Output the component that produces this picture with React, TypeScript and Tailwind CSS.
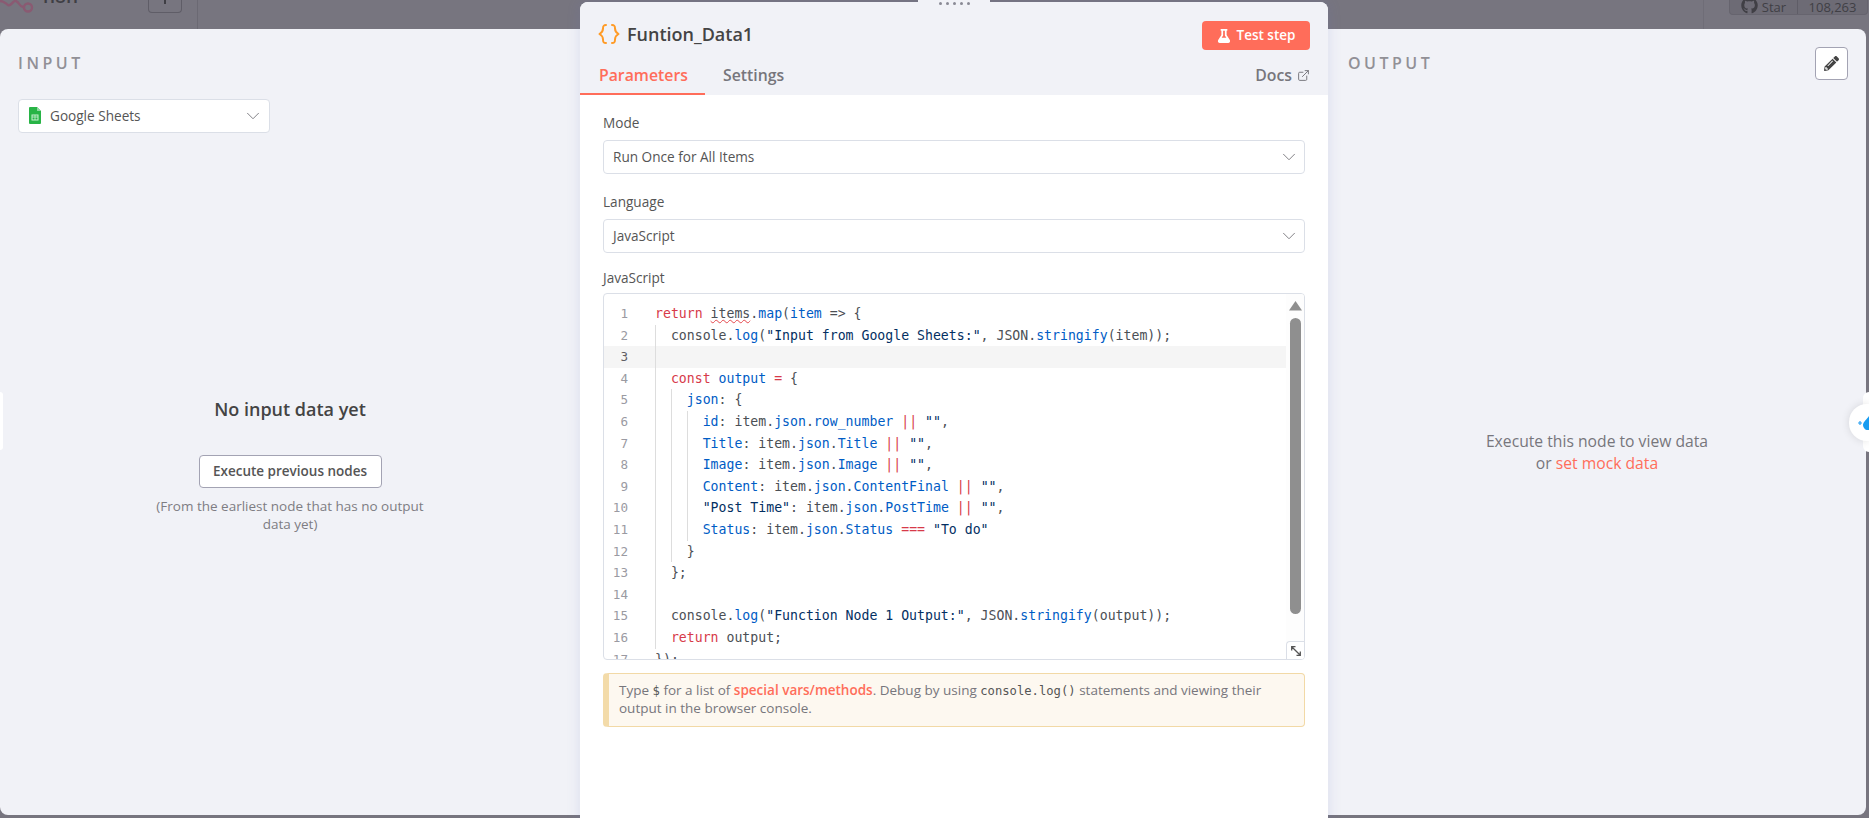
import React from "react";
import { FaFlask, FaPencilAlt, FaGithub } from "react-icons/fa";
import { ChevronDown, ExternalLink } from "lucide-react";

const K = ({ children }: { children: React.ReactNode }) => <span className="text-[#d73a49]">{children}</span>;
const B = ({ children }: { children: React.ReactNode }) => <span className="text-[#005cc5]">{children}</span>;
const S = ({ children }: { children: React.ReactNode }) => <span className="text-[#032f62]">{children}</span>;

const lines: { g: number; c: React.ReactNode }[] = [
  { g: 0, c: <><K>return</K> <span className="underline decoration-wavy decoration-[#e5484d] decoration-1">items</span>.<B>map</B>(<B>item</B> =&gt; {"{"}</> },
  { g: 1, c: <>console.<B>log</B>(<S>"Input from Google Sheets:"</S>, JSON.<B>stringify</B>(item));</> },
  { g: 1, c: <></> },
  { g: 1, c: <><K>const</K> <B>output</B> <K>=</K> {"{"}</> },
  { g: 2, c: <><B>json</B>: {"{"}</> },
  { g: 3, c: <><B>id</B>: item.<B>json</B>.<B>row_number</B> <K>||</K> <S>""</S>,</> },
  { g: 3, c: <><B>Title</B>: item.<B>json</B>.<B>Title</B> <K>||</K> <S>""</S>,</> },
  { g: 3, c: <><B>Image</B>: item.<B>json</B>.<B>Image</B> <K>||</K> <S>""</S>,</> },
  { g: 3, c: <><B>Content</B>: item.<B>json</B>.<B>ContentFinal</B> <K>||</K> <S>""</S>,</> },
  { g: 3, c: <><S>"Post Time"</S>: item.<B>json</B>.<B>PostTime</B> <K>||</K> <S>""</S>,</> },
  { g: 3, c: <><B>Status</B>: item.<B>json</B>.<B>Status</B> <K>===</K> <S>"To do"</S></> },
  { g: 2, c: <>{"}"}</> },
  { g: 1, c: <>{"};"}</> },
  { g: 1, c: <></> },
  { g: 1, c: <>console.<B>log</B>(<S>"Function Node 1 Output:"</S>, JSON.<B>stringify</B>(output));</> },
  { g: 1, c: <><K>return</K> output;</> },
  { g: 0, c: <>{"});"}</> },
];

function Select({ label }: { label: string }) {
  return (
    <div className="flex h-[34px] items-center justify-between rounded-[4px] border border-[#dbdfe7] bg-white pl-[9px] pr-[4px] text-[13.6px] text-[#555555]">
      <span>{label}</span>
      <ChevronDown size={22} strokeWidth={1} className="text-[#77767c]" />
    </div>
  );
}

function Sheets() {
  return (
    <svg width="12" height="17" viewBox="0 0 12 17">
      <path d="M1 0h7l4 4v12a1 1 0 0 1-1 1H1a1 1 0 0 1-1-1V1a1 1 0 0 1 1-1z" fill="#28b446" />
      <path d="M8 0l4 4H8z" fill="#8ed8a0" />
      <rect x="3" y="8" width="6" height="5" fill="none" stroke="#c9f0d2" strokeWidth="1" />
      <path d="M3 10h6M6 8v5" stroke="#c9f0d2" strokeWidth="0.8" />
    </svg>
  );
}

export default function App() {
  return (
    <div className="h-[818px] w-[1869px] overflow-hidden bg-[#77757f] font-['Open_Sans',sans-serif]">
      {/* dimmed canvas header */}
      <div className="flex h-[29px] items-start">
        <div className="flex h-[29px] w-[198px] items-start border-r border-[#6b6973]">
          <svg width="34" height="14" viewBox="0 0 34 14" className="shrink-0">
            <path d="M0 1c4 0 5 2 8 4s5-5 8-4 3 5 7 6" fill="none" stroke="#8a5a72" strokeWidth="2.4" />
            <circle cx="28" cy="7.5" r="4" fill="none" stroke="#8a5a72" strokeWidth="2.4" />
          </svg>
          <div className="ml-[9px] h-[7px] w-[40px] overflow-hidden">
            <div className="-mt-[14px] text-[19px] font-semibold leading-[20px] text-[#3f3e44]">n8n</div>
          </div>
          <div className="ml-[65px] flex h-[13px] w-[34px] items-start justify-center rounded-b-[4px] border border-t-0 border-[#5f5d67]">
            <div className="h-[4px] w-[2px] bg-[#3f3e44]" />
          </div>
        </div>
        <div className="flex-1" />
        <div className="flex h-[29px] w-[166px] items-start border-l border-[#6f6d77] pl-[25px]">
          <div className="flex h-[15px] w-[139px] items-end rounded-b-[4px] border border-t-0 border-[#66646e] bg-[#6d6b75] text-[13px] leading-[14px] text-[#403f45]">
            <div className="flex w-[68px] items-center justify-center gap-[4px] overflow-hidden border-r border-[#5f5d67]">
              <FaGithub size={17} className="-mt-[3px]" />
              <span>Star</span>
            </div>
            <div className="flex-1 text-center">108,263</div>
          </div>
        </div>
      </div>

      {/* dialog */}
      <div className="flex h-[786px] w-[1866px] rounded-[8px] bg-[#f1f2f7]">
        {/* input */}
        <div className="relative flex w-[580px] shrink-0 flex-col px-[18px]">
          <div className="pt-[23px] text-[16px] font-semibold leading-[22px] tracking-[3.5px] text-[#919096]">INPUT</div>
          <div className="mt-[25px] flex h-[34px] w-[252px] items-center justify-between rounded-[4px] border border-[#dbdfe7] bg-white pl-[10px] pr-[5px] text-[13.6px] text-[#555555]">
            <span className="flex items-center gap-[9px]"><Sheets />Google Sheets</span>
            <ChevronDown size={22} strokeWidth={1} className="text-[#77767c]" />
          </div>
          <div className="flex flex-col items-center pt-[263px]">
            <div className="text-[18px] font-semibold leading-[26px] text-[#444444]">No input data yet</div>
            <div className="mt-[33px] flex h-[33px] w-[183px] items-center justify-center rounded-[4px] border border-[#a3a3b3] bg-white text-[13.5px] font-semibold text-[#555555]">Execute previous nodes</div>
            <div className="mt-[9px] w-[280px] text-center text-[13.5px] leading-[18px] text-[#7e7d83]">(From the earliest node that has no output data yet)</div>
          </div>
          <div className="absolute left-0 top-[363px] h-[58px] w-[3px] rounded-r-[4px] bg-white" />
        </div>

        {/* center panel */}
        <div className="relative z-10 -mt-[27px] w-[748px] shrink-0">
          <div className="absolute -top-[2px] left-[338px] flex h-[7px] w-[72px] items-center justify-center gap-[4px] bg-[#f1f2f7]">
            {[0, 1, 2, 3, 4].map((d) => (
              <span key={d} className="h-[3px] w-[3px] rounded-full bg-[#8a8a95]" />
            ))}
          </div>
          <div className="flex h-[830px] flex-col overflow-hidden rounded-t-[8px] bg-white shadow-[0_0_14px_rgba(99,110,190,0.16)]">
            <div className="bg-[#f1f2f7]">
              <div className="flex h-[64px] items-start justify-between pl-[18px] pr-[18px] pt-[19px]">
                <div className="mt-[1px] flex items-center gap-[7px]">
                  <svg width="22" height="22" viewBox="0 0 22 22" fill="none" stroke="#ff9b26" strokeWidth="2" strokeLinecap="round" strokeLinejoin="round">
                    <path d="M8 2C5 2 5 3.500 5 5.500S5 9 1.500 11C5 13 5 14.500 5 16.500S5 20 8 20" />
                    <path d="M14 2C17 2 17 3.500 17 5.500S17 9 20.500 11C17 13 17 14.500 17 16.500S17 20 14 20" />
                  </svg>
                  <span className="text-[18px] font-semibold leading-[24px] text-[#444444]">Funtion_Data1</span>
                </div>
                <div className="flex h-[29px] w-[108px] items-center justify-center gap-[6px] rounded-[4px] bg-[#ff6d5a] text-[13.5px] font-semibold text-white">
                  <FaFlask size={14} />Test step
                </div>
              </div>
              <div className="flex h-[29px] items-start justify-between pr-[18px]">
                <div className="flex">
                  <div className="h-[29px] w-[125px] border-b-2 border-[#ff6d5a] pl-[19px] text-[15.8px] font-semibold leading-[18px] text-[#ff6d5a]">Parameters</div>
                  <div className="pl-[18px] text-[15.8px] font-semibold leading-[18px] text-[#77767c]">Settings</div>
                </div>
                <div className="flex items-center gap-[5px] text-[15.8px] font-semibold leading-[18px] text-[#77767c]">Docs<ExternalLink size={13} strokeWidth={1.8} /></div>
              </div>
            </div>

            <div className="px-[23px] pt-[17px]">
              <div className="text-[13.6px] leading-[22px] text-[#555555]">Mode</div>
              <div className="mt-[6px]"><Select label="Run Once for All Items" /></div>
              <div className="mt-[17px] text-[13.6px] leading-[22px] text-[#555555]">Language</div>
              <div className="mt-[6px]"><Select label="JavaScript" /></div>
              <div className="mt-[14px] text-[13.6px] leading-[22px] text-[#555555]">JavaScript</div>
              <div className="relative mt-[4px] flex h-[367px] overflow-hidden rounded-[4px] border border-[#dbdfe7] bg-white">
                <div className="min-w-0 flex-1 pt-[9px] font-['DejaVu_Sans_Mono',monospace] text-[13.2px] leading-[21.6px] text-[#4b4f55]">
                  {lines.map((l, i) => (
                    <div key={i} className={`flex h-[21.6px] whitespace-pre ${i === 2 ? "bg-[#f5f5f5]" : ""}`}>
                      <div className={`w-[24px] shrink-0 text-right text-[12.6px] ${i === 2 ? "text-[#5e5e63]" : "text-[#9a9aa2]"}`}>{i + 1}</div>
                      <div className="w-[27px] shrink-0" />
                      {Array.from({ length: l.g }).map((_, g) => (
                        <span key={g} className="inline-block h-[21.6px] w-[15.9px] shrink-0 border-l border-[#dddddd]" />
                      ))}
                      <span>{l.c}</span>
                    </div>
                  ))}
                </div>
                <div className="flex w-[18px] shrink-0 flex-col items-center bg-[#fdfdfd] pt-[7px]">
                  <svg width="13" height="10" viewBox="0 0 13 10"><path d="M6.5 0L13 9.500H0z" fill="#8f8f8f" /></svg>
                  <div className="mt-[7px] h-[296px] w-[11px] rounded-[6px] bg-[#8f8f8f]" />
                </div>
                <div className="absolute bottom-0 right-0 flex h-[18px] w-[18px] items-center justify-center rounded-tl-[4px] border-l border-t border-[#dbdfe7] bg-white">
                  <svg width="10" height="10" viewBox="0 0 10 10" fill="none" stroke="#555555" strokeWidth="1.300">
                    <path d="M0.700 4.500V0.700h3.800M0.700 0.700l8.600 8.600M9.300 5.500v3.800H5.500" />
                  </svg>
                </div>
              </div>
              <div className="mt-[13px] h-[54px] rounded-[4px] border border-[#f2d9a6] border-l-[6px] border-l-[#f3dba9] bg-[#fdf8f0] pl-[10px] pr-[30px] pt-[8px] text-[13.5px] leading-[17px] text-[#77767c]">
                Type <code className="font-['DejaVu_Sans_Mono',monospace] text-[12.2px] text-[#555555]">$</code> for a list of <span className="font-semibold text-[#ff6d5a]">special vars/methods</span>. Debug by using <code className="font-['DejaVu_Sans_Mono',monospace] text-[12.2px] text-[#555555]">console.log()</code> statements and viewing their output in the browser console.
              </div>
            </div>
          </div>
        </div>

        {/* output */}
        <div className="relative flex min-w-0 flex-1 flex-col pl-[20px] pr-[18px]">
          <div className="flex items-start justify-between pt-[18px]">
            <div className="pt-[5px] text-[16px] font-semibold leading-[22px] tracking-[3.5px] text-[#919096]">OUTPUT</div>
            <div className="flex h-[33px] w-[33px] items-center justify-center rounded-[4px] border border-[#a3a3b3] bg-white text-[#444444]"><FaPencilAlt size={15} /></div>
          </div>
          <div className="flex flex-col items-center pr-[2px] pt-[350px] text-center text-[15.7px] leading-[22px] text-[#77767c]">
            <div>Execute this node to view data</div>
            <div>or <span className="text-[#ff6d5a]">set mock data</span></div>
          </div>
          <div className="absolute -right-[3px] top-[363px] h-[60px] w-[6px] rounded-l-[6px] bg-white" />
          <div className="absolute -right-[3px] top-[375px] flex h-[37px] w-[20px] items-center justify-end gap-[1px] rounded-l-[18px] bg-white shadow-[0_0_8px_rgba(0,0,0,0.12)]">
            <svg width="13" height="14" viewBox="0 0 13 14"><path d="M2 7h4M4 5v4" stroke="#2aa1f2" strokeWidth="1.200" fill="none" /><path d="M13 0c-2 3-6 6-6 9a5 5 0 0 0 6 5z" fill="#189cf0" /></svg>
          </div>
        </div>
      </div>
    </div>
  );
}
